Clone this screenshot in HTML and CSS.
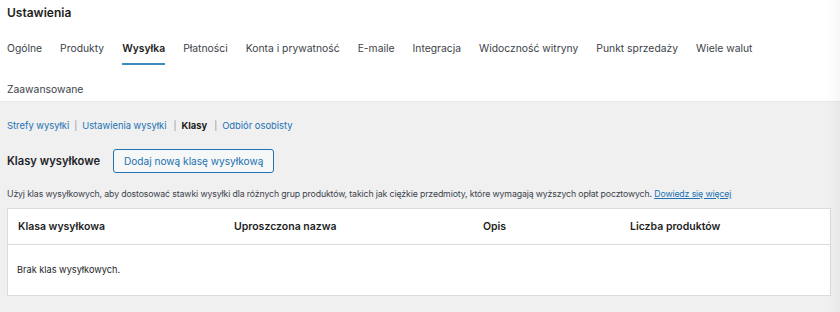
FILE: index.html
```html
<!DOCTYPE html>
<html lang="pl">
<head>
<meta charset="utf-8">
<link rel="stylesheet" href="styles.css">
</head>
<body>
<div class="page">
  <header class="top">
    <h1 class="title">Ustawienia</h1>
    <nav class="tabs">
      <a class="tab">Ogólne</a>
      <a class="tab">Produkty</a>
      <a class="tab active">Wysyłka</a>
      <a class="tab">Płatności</a>
      <a class="tab">Konta i prywatność</a>
      <a class="tab">E-maile</a>
      <a class="tab">Integracja</a>
      <a class="tab">Widoczność witryny</a>
      <a class="tab">Punkt sprzedaży</a>
      <a class="tab">Wiele walut</a>
      <a class="tab">Zaawansowane</a>
    </nav>
  </header>
  <main class="content">
    <div class="subnav">
      <a class="sublink">Strefy wysyłki</a><span class="sep">|</span>
      <a class="sublink">Ustawienia wysyłki</a><span class="sep wide">|</span>
      <span class="current">Klasy</span><span class="sep wide">|</span>
      <a class="sublink">Odbiór osobisty</a>
    </div>
    <div class="heading-row">
      <h2 class="heading">Klasy wysyłkowe</h2>
      <button class="btn">Dodaj nową klasę wysyłkową</button>
    </div>
    <p class="desc">Użyj klas wysyłkowych, aby dostosować stawki wysyłki dla różnych grup produktów, takich jak ciężkie przedmioty, które wymagają wyższych opłat pocztowych. <a class="more">Dowiedz się więcej</a></p>
    <div class="table">
      <div class="thead">
        <div class="th">Klasa wysyłkowa</div>
        <div class="th">Uproszczona nazwa</div>
        <div class="th">Opis</div>
        <div class="th">Liczba produktów</div>
      </div>
      <div class="tbody">Brak klas wysyłkowych.</div>
    </div>
  </main>
  <div class="edge-shadow"></div>
</div>
</body>
</html>
```
FILE: styles.css
```css
* { box-sizing: border-box; }
html, body { margin: 0; padding: 0; }
body {
  font-family: Inter, "Noto Sans", "Liberation Sans", sans-serif;
  color: #1e1e1e;
  background: #f0f0f1;
  width: 840px;
  height: 312px;
  overflow: hidden;
}
.page { position: relative; height: 312px; }
.top {
  background: #fff;
  height: 102px;
  padding: 4px 7px 0;
  border-bottom: 1px solid #e8e8e8;
}
.title {
  margin: 0;
  font-size: 12px;
  font-weight: 600;
  line-height: 17px;
  color: #1e1e1e;
}
.tabs {
  display: flex;
  flex-wrap: wrap;
  column-gap: 18px;
  margin-top: 7px;
}
.tab {
  font-size: 10.35px;
  line-height: 41px;
  height: 41px;
  color: #3c434a;
  position: relative;
}
.tab.active {
  font-weight: 600;
  color: #1e1e1e;
}
.tab.active::after {
  content: "";
  position: absolute;
  left: 0; right: 0;
  bottom: 4px;
  height: 2px;
  background: #3d8bbf;
}
.content { padding: 0 9px 0 7px; }
.subnav {
  display: flex;
  align-items: center;
  margin-top: 17px;
  font-size: 9.4px;
  line-height: 14px;
  color: #50575e;
}
.sublink { color: #2271b1; }
.sep { margin: 0 5px; color: #8c8f94; font-size: 9px; }
.sep.wide { margin-left: 7px; }
.current { font-weight: 700; color: #1e1e1e; }
.heading-row {
  display: flex;
  align-items: center;
  gap: 13px;
  margin-top: 16px;
}
.heading {
  margin: 0;
  font-size: 11.2px;
  font-weight: 600;
  color: #1d2327;
}
.btn {
  font-family: inherit;
  font-size: 10.1px;
  color: #2271b1;
  background: #f6f7f7;
  border: 1px solid #2271b1;
  border-radius: 3px;
  height: 24px;
  padding: 0 10px;
}
.desc {
  margin: 14px 0 0;
  font-size: 8.75px;
  letter-spacing: -0.13px;
  line-height: 14px;
  color: #3c434a;
}
.more { color: #2271b1; text-decoration: underline; }
.table {
  margin-top: 7px;
  background: #fff;
  border: 1px solid #dcdcde;
  height: 88px;
}
.thead {
  display: grid;
  grid-template-columns: 216px 249px 147px 1fr;
  height: 36px;
  align-items: center;
  border-bottom: 1px solid #dcdcde;
  padding-left: 10px;
}
.th {
  font-size: 10.5px;
  font-weight: 600;
  color: #1e1e1e;
}
.tbody {
  padding: 19px 9px;
  font-size: 9.2px;
  color: #1e1e1e;
}
.edge-shadow {
  position: absolute;
  top: 0; right: 0;
  width: 14px; height: 312px;
  background: linear-gradient(to right, rgba(0,0,0,0), rgba(0,0,0,0.03));
  pointer-events: none;
}
```
